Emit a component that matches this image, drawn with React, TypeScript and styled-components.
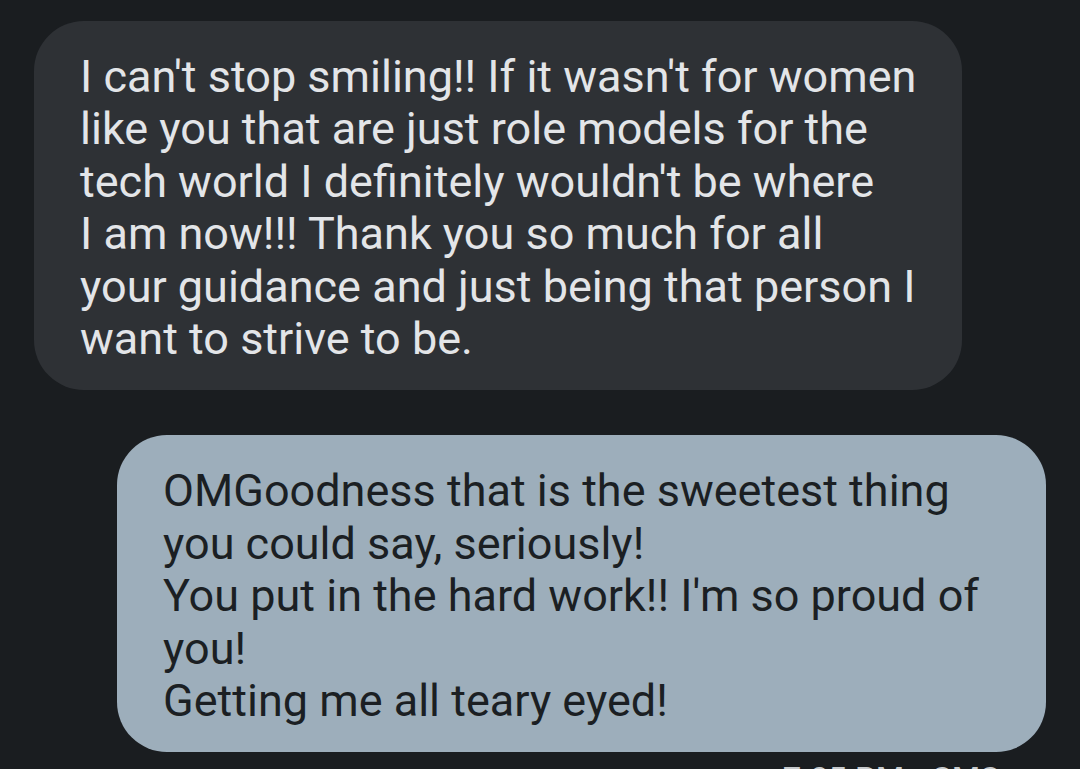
import React from "react";
import styled, { createGlobalStyle } from "styled-components";

const Global = createGlobalStyle`
  html, body {
    margin: 0;
    padding: 0;
    background: #1a1d20;
    overflow: hidden;
  }
  body {
    font-family: Roboto, "Noto Sans", sans-serif;
  }
`;

const Screen = styled.div`
  width: 1080px;
  height: 769px;
  background: #1a1d20;
  box-sizing: border-box;
  padding-top: 21px;
  display: flex;
  flex-direction: column;
  overflow: hidden;
`;

const Row = styled.div<{ $out?: boolean }>`
  display: flex;
  justify-content: ${(p) => (p.$out ? "flex-end" : "flex-start")};
  padding: ${(p) => (p.$out ? "0 34px 0 0" : "0 0 0 34px")};
  margin-bottom: ${(p) => (p.$out ? "8px" : "45px")};
`;

const Bubble = styled.div<{ $out?: boolean }>`
  width: ${(p) => (p.$out ? "929px" : "928px")};
  box-sizing: border-box;
  padding: 30px 40px 25px 46px;
  border-radius: 50px;
  background: ${(p) => (p.$out ? "#9daebb" : "#2e3135")};
  color: ${(p) => (p.$out ? "#1b1f23" : "#e3e5e8")};
  font-size: 45px;
  line-height: 52.4px;
  letter-spacing: 0;
  white-space: nowrap;
`;

const Meta = styled.div`
  display: flex;
  justify-content: flex-end;
  padding-right: 80px;
  color: #c6c9cc;
  font-size: 32px;
  font-weight: 500;
  line-height: 36px;
  letter-spacing: 0.3px;
`;

export default function App() {
  return (
    <Screen>
      <Global />
      <Row>
        <Bubble>
          I can't stop smiling!! If it wasn't for women
          <br />
          like you that are just role models for the
          <br />
          tech world I definitely wouldn't be where
          <br />
          I am now!!! Thank you so much for all
          <br />
          your guidance and just being that person I
          <br />
          want to strive to be.
        </Bubble>
      </Row>
      <Row $out>
        <Bubble $out>
          OMGoodness that is the sweetest thing
          <br />
          you could say, seriously!
          <br />
          You put in the hard work!! I'm so proud of
          <br />
          you!
          <br />
          Getting me all teary eyed!
        </Bubble>
      </Row>
      <Meta>7:05 PM • SMS</Meta>
    </Screen>
  );
}
